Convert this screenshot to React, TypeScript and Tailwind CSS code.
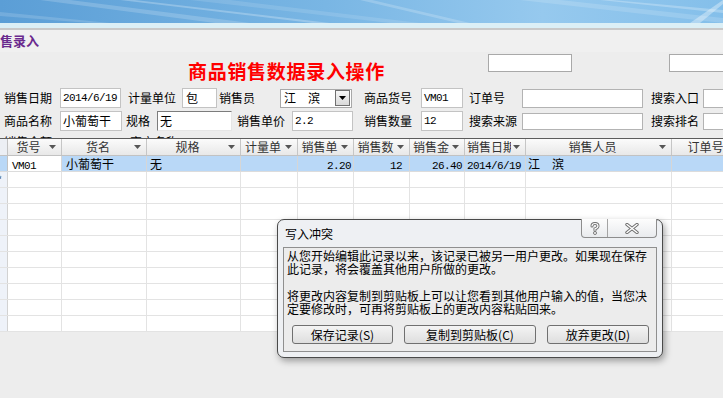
import React from 'react';

const CJK = "font-['Noto_Sans_CJK_SC','Noto_Sans',sans-serif]";
const MONO = "font-['Liberation_Mono',monospace] text-[11px] tracking-[-0.6px]";

// cabeçalho azul com riscos brancos
const Banner = () => (
  <svg width="723" height="23" className="block">
    <defs>
      <linearGradient id="bg" x1="0" y1="0" x2="1" y2="0">
        <stop offset="0" stopColor="#5b9ed6" />
        <stop offset="0.45" stopColor="#79b6e4" />
        <stop offset="0.75" stopColor="#96c9ee" />
        <stop offset="1" stopColor="#84bfea" />
      </linearGradient>
    </defs>
    <rect width="723" height="23" fill="url(#bg)" />
    <polygon points="40,0 70,0 250,23 215,23" fill="#ffffff" opacity="0.18" />
    <polygon points="120,0 135,0 330,23 312,23" fill="#ffffff" opacity="0.25" />
    <polygon points="190,0 230,0 420,23 390,23" fill="#ffffff" opacity="0.12" />
    <polygon points="360,0 372,0 470,23 458,23" fill="#ffffff" opacity="0.2" />
    <polygon points="520,0 560,0 723,18 723,23" fill="#ffffff" opacity="0.15" />
    <polygon points="600,0 612,0 723,10 723,13" fill="#ffffff" opacity="0.25" />
    <polygon points="690,23 700,23 723,4 723,0" fill="#ffffff" opacity="0.35" />
    <polygon points="0,12 0,16 90,23 110,23" fill="#ffffff" opacity="0.15" />
  </svg>
);

const Box = ({ className = '', children }: { className?: string; children?: React.ReactNode }) => (
  <div className={`shrink-0 bg-white flex items-center overflow-hidden whitespace-nowrap ${className}`}>{children}</div>
);

const Arrow = () => (
  <svg width="7" height="4" className="shrink-0 ml-[2px] mr-[5px]">
    <polygon points="0,0 7,0 3.5,4" fill="#555" />
  </svg>
);

const cols = [
  { w: 'w-[54px]', t: '货号' },
  { w: 'w-[85px]', t: '货名' },
  { w: 'w-[94px]', t: '规格' },
  { w: 'w-[57px]', t: '计量单' },
  { w: 'w-[56px]', t: '销售单' },
  { w: 'w-[56px]', t: '销售数' },
  { w: 'w-[55px]', t: '销售金' },
  { w: 'w-[61px]', t: '销售日期' },
  { w: 'w-[146px]', t: '销售人员' },
  { w: 'w-[80px]', t: '订单号' },
];

const App = () => {
  return (
    <div className={`relative w-[723px] h-[398px] overflow-hidden bg-[#ededed] text-black ${CJK}`}>
      <Banner />
      <div className="h-[5px] bg-[#dbeff6]" />
      <div className="h-[2px] bg-[#c9c9c9]" />

      {/* titulo da aba */}
      <div className="h-[22px] bg-[#f0f0f0] pt-[4px] text-[13px] leading-[14px] font-bold text-[#6a2a8e] whitespace-nowrap">售录入</div>

      {/* formulario */}
      <div className="h-[86px] overflow-hidden text-[12px]">
        <div className="flex items-start h-[36px]">
          <span className="ml-[188px] mt-[7px] text-[19px] leading-[24px] tracking-[0.7px] font-bold text-[#ff0000] whitespace-nowrap">
            商品销售数据录入操作
          </span>
          <div className="ml-[103px] mt-[2px] w-[84px] h-[18px] shrink-0 bg-white border border-[#a9a9a9]" />
          <div className="ml-[97px] mt-[2px] w-[80px] h-[18px] shrink-0 bg-white border border-[#a9a9a9]" />
        </div>

        <div className="flex items-center h-[20px] whitespace-nowrap">
          <div className="ml-[4px] w-[56px] shrink-0">销售日期</div>
          <Box className="w-[61px] h-[20px] border border-[#c3c3c3] pl-[2px]"><span className={MONO}>2014/6/19</span></Box>
          <div className="w-[61px] shrink-0 pl-[7px]">计量单位</div>
          <Box className="w-[35px] h-[20px] border border-[#c3c3c3] pl-[3px]">包</Box>
          <div className="w-[63px] shrink-0 pl-[2px]">销售员</div>
          <Box className="w-[72px] h-[19px] border border-[#a8a8a8] pl-[3px] relative">
            <span>江　滨</span>
            <div className="ml-auto mr-[1px] w-[15px] h-[16px] border border-[#707070] bg-[linear-gradient(#f6f6f6,#d9d9d9)] flex items-center justify-center">
              <svg width="7" height="4"><polygon points="0,0 7,0 3.5,4" fill="#000" /></svg>
            </div>
          </Box>
          <div className="w-[69px] shrink-0 pl-[12px]">商品货号</div>
          <Box className="w-[42px] h-[20px] border border-[#c3c3c3] pl-[2px]"><span className={MONO}>VM01</span></Box>
          <div className="w-[59px] shrink-0 pl-[6px]">订单号</div>
          <Box className="w-[121px] h-[19px] border border-[#b3b3b3]" />
          <div className="w-[60px] shrink-0 pl-[8px]">搜索入口</div>
          <Box className="w-[40px] h-[19px] border border-[#b3b3b3]" />
        </div>

        <div className="flex items-center h-[20px] mt-[3px] whitespace-nowrap">
          <div className="ml-[4px] w-[56px] shrink-0">商品名称</div>
          <Box className="w-[62px] h-[20px] border border-[#c3c3c3] pl-[2px]">小葡萄干</Box>
          <div className="w-[35px] shrink-0 pl-[4px]">规格</div>
          <Box className="w-[75px] h-[20px] border border-t-[#7c7c7c] border-l-[#7c7c7c] border-r-[#e6e6e6] border-b-[#e6e6e6] pl-[2px]">无</Box>
          <div className="w-[60px] shrink-0 pl-[5px]">销售单价</div>
          <Box className="w-[61px] h-[20px] border border-[#c3c3c3] pl-[2px]"><span className={MONO}>2.2</span></Box>
          <div className="w-[68px] shrink-0 pl-[11px]">销售数量</div>
          <Box className="w-[42px] h-[20px] border border-[#c3c3c3] pl-[2px]"><span className={MONO}>12</span></Box>
          <div className="w-[59px] shrink-0 pl-[6px]">搜索来源</div>
          <Box className="w-[121px] h-[17px] border border-[#b3b3b3]" />
          <div className="w-[60px] shrink-0 pl-[8px]">搜索排名</div>
          <Box className="w-[40px] h-[17px] border border-[#b3b3b3]" />
        </div>

        <div className="flex items-start h-[20px] mt-[4px] whitespace-nowrap leading-[14px]">
          <div className="ml-[4px] w-[56px] shrink-0">销售金额</div>
          <div className="ml-[70px] w-[60px] shrink-0">客户名称</div>
        </div>
      </div>

      {/* folha de dados */}
      <div className="border-t border-[#5c5c5c] bg-white text-[12px] whitespace-nowrap">
        <div className="flex h-[17px] bg-[linear-gradient(#fbfbfb,#e8e8e8)] border-b border-[#c2c2c2]">
          <div className="w-[8px] shrink-0 border-r border-[#c2c2c2] bg-[#eceff4]" />
          {cols.map((c) => (
            <div key={c.t} className={`${c.w} shrink-0 flex items-center border-r border-[#c6c6c6] text-[#333]`}>
              <span className="flex-1 min-w-0 overflow-hidden text-center pl-[2px] leading-[16px]">{c.t}</span>
              <Arrow />
            </div>
          ))}
        </div>

        {/* linha atual */}
        <div className="flex h-[16px] border-b border-[#dcdcdc] bg-[#b9d8f7] leading-[15px]">
          <div className="w-[8px] shrink-0 border-r border-[#c2c2c2] bg-[#b9d8f7]" />
          <div className="w-[54px] shrink-0 bg-white border-r border-[#d6d6d6] pl-[4px]"><span className={MONO}>VM01</span></div>
          <div className="w-[85px] shrink-0 border-r border-[#d6d6d6] pl-[4px]">小葡萄干</div>
          <div className="w-[94px] shrink-0 border-r border-[#d6d6d6] pl-[3px]">无</div>
          <div className="w-[57px] shrink-0 border-r border-[#d6d6d6]" />
          <div className="w-[56px] shrink-0 border-r border-[#d6d6d6] text-right pr-[2px]"><span className={MONO}>2.20</span></div>
          <div className="w-[56px] shrink-0 border-r border-[#d6d6d6] text-right pr-[7px]"><span className={MONO}>12</span></div>
          <div className="w-[55px] shrink-0 border-r border-[#d6d6d6] text-right pr-[2px]"><span className={MONO}>26.40</span></div>
          <div className="w-[61px] shrink-0 border-r border-[#d6d6d6] pl-[2px] overflow-hidden"><span className={MONO}>2014/6/19</span></div>
          <div className="w-[146px] shrink-0 border-r border-[#d6d6d6] pl-[2px]">江　滨</div>
          <div className="w-[80px] shrink-0" />
        </div>

        {/* linha nova e vazias */}
        {Array.from({ length: 10 }).map((_, i) => (
          <div key={i} className="flex h-[16px] border-b border-[#e3e3e3]">
            <div className="w-[8px] shrink-0 border-r border-[#d2d2d2] bg-[#eef2f9] overflow-hidden text-[11px] leading-[15px] text-[#444]">
              {i === 0 ? <span className="-ml-[3px]">*</span> : null}
            </div>
            {cols.map((c) => (
              <div key={c.t} className={`${c.w} shrink-0 border-r border-[#e3e3e3]`} />
            ))}
          </div>
        ))}
      </div>

      {/* dialogo de conflito */}
      <div className="absolute left-[277px] top-[219px] w-[386px] h-[139px] rounded-[7px] border border-[#4a4a4a] bg-[#eef0f3] shadow-[2px_3px_7px_rgba(0,0,0,0.35)] text-[12px]">
        <div className="flex h-[27px]">
          <span className="ml-[7px] mt-[7px] leading-[13px]">写入冲突</span>
          <div className="ml-auto mr-[5px] -mt-px flex h-[19px] rounded-b-[4px] border border-t-0 border-[#8d8d8d] bg-[linear-gradient(#fdfdfd,#e9ebee)]">
            <div className="w-[26px] flex items-center justify-center border-r border-[#a4a4a4]">
              <svg width="10" height="13" viewBox="0 0 10 13">
                <path d="M2 4 Q2 1.5 5 1.5 Q8 1.5 8 4 Q8 5.8 5 6.8 L5 8.3" fill="none" stroke="#6d6d6d" strokeWidth="3" strokeLinecap="round" />
                <path d="M2 4 Q2 1.5 5 1.5 Q8 1.5 8 4 Q8 5.8 5 6.8 L5 8.3" fill="none" stroke="#ffffff" strokeWidth="1.2" strokeLinecap="round" />
                <circle cx="5" cy="11" r="1.5" fill="#ffffff" stroke="#6d6d6d" strokeWidth="0.9" />
              </svg>
            </div>
            <div className="w-[48px] flex items-center justify-center">
              <svg width="14" height="11" viewBox="0 0 14 11">
                <path d="M2 1.5 L12 9.5 M12 1.5 L2 9.5" stroke="#6d6d6d" strokeWidth="3.4" strokeLinecap="round" />
                <path d="M2 1.5 L12 9.5 M12 1.5 L2 9.5" stroke="#ffffff" strokeWidth="1.5" strokeLinecap="round" />
              </svg>
            </div>
          </div>
        </div>
        <div className="mx-[5px] h-[105px] border border-[#8f8f8f] bg-[#ececec] pl-[3px] pt-[1px] leading-[13px] whitespace-nowrap">
          <div>
            从您开始编辑此记录以来，该记录已被另一用户更改。如果现在保存
            <br />
            此记录，将会覆盖其他用户所做的更改。
          </div>
          <div className="mt-[14px]">
            将更改内容复制到剪贴板上可以让您看到其他用户输入的值，当您决
            <br />
            定要修改时，可再将剪贴板上的更改内容粘贴回来。
          </div>
          <div className="flex mt-[10px] ml-[5px] gap-[11px]">
            <button className="w-[101px] h-[19px] rounded-[3px] border border-[#707070] bg-[linear-gradient(#f4f4f4,#dedede)] leading-[17px]">保存记录(S)</button>
            <button className="w-[132px] h-[19px] rounded-[3px] border border-[#707070] bg-[linear-gradient(#f4f4f4,#dedede)] leading-[17px]">复制到剪贴板(C)</button>
            <button className="w-[102px] h-[19px] rounded-[3px] border border-[#707070] bg-[linear-gradient(#f4f4f4,#dedede)] leading-[17px]">放弃更改(D)</button>
          </div>
        </div>
      </div>
    </div>
  );
};

export default App;
